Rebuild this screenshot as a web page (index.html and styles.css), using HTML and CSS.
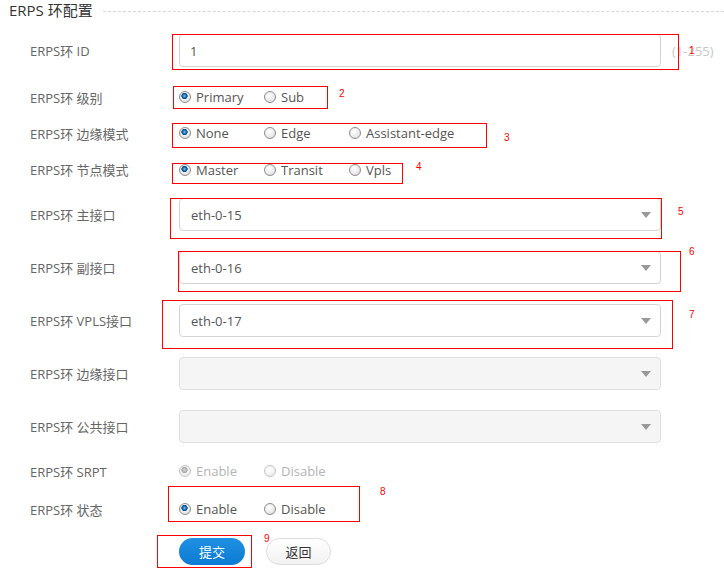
FILE: index.html
```html
<!DOCTYPE html>
<html lang="zh-CN">
<head>
    <meta charset="UTF-8">
    <meta name="viewport" content="width=device-width, initial-scale=1.0">
    <title>ERPS 环配置</title>
    <link rel="stylesheet" href="styles.css">
</head>
<body>
<div class="page">
    <div class="legend">
        <span class="legend-title">ERPS 环配置</span>
        <span class="legend-line"></span>
    </div>

    <form class="form">
        <div class="row row-id">
            <label class="label" for="ring_id">ERPS环 ID</label>
            <input class="text-input" type="text" id="ring_id" value="1">
            <span class="hint">(1-255)</span>
        </div>

        <div class="row row-radio row-first">
            <span class="label">ERPS环 级别</span>
            <div class="radio-group">
                <label class="radio-item"><input class="radio" type="radio" name="level" checked>Primary</label>
                <label class="radio-item"><input class="radio" type="radio" name="level">Sub</label>
            </div>
        </div>

        <div class="row row-radio">
            <span class="label">ERPS环 边缘模式</span>
            <div class="radio-group">
                <label class="radio-item"><input class="radio" type="radio" name="edge" checked>None</label>
                <label class="radio-item"><input class="radio" type="radio" name="edge">Edge</label>
                <label class="radio-item"><input class="radio" type="radio" name="edge">Assistant-edge</label>
            </div>
        </div>

        <div class="row row-radio row-node">
            <span class="label">ERPS环 节点模式</span>
            <div class="radio-group">
                <label class="radio-item"><input class="radio" type="radio" name="node" checked>Master</label>
                <label class="radio-item"><input class="radio" type="radio" name="node">Transit</label>
                <label class="radio-item"><input class="radio" type="radio" name="node">Vpls</label>
            </div>
        </div>

        <div class="row row-select">
            <span class="label">ERPS环 主接口</span>
            <div class="select"><select><option>eth-0-15</option></select></div>
        </div>

        <div class="row row-select">
            <span class="label">ERPS环 副接口</span>
            <div class="select"><select><option>eth-0-16</option></select></div>
        </div>

        <div class="row row-select">
            <span class="label">ERPS环 VPLS接口</span>
            <div class="select"><select><option>eth-0-17</option></select></div>
        </div>

        <div class="row row-select">
            <span class="label">ERPS环 边缘接口</span>
            <div class="select select-disabled"><select disabled><option></option></select></div>
        </div>

        <div class="row row-select">
            <span class="label">ERPS环 公共接口</span>
            <div class="select select-disabled"><select disabled><option></option></select></div>
        </div>

        <div class="row row-radio">
            <span class="label">ERPS环 SRPT</span>
            <div class="radio-group">
                <label class="radio-item is-disabled"><input class="radio" type="radio" name="srpt" checked disabled>Enable</label>
                <label class="radio-item is-disabled"><input class="radio" type="radio" name="srpt" disabled>Disable</label>
            </div>
        </div>

        <div class="row row-status">
            <span class="label">ERPS环 状态</span>
            <div class="radio-group">
                <label class="radio-item"><input class="radio" type="radio" name="status" checked>Enable</label>
                <label class="radio-item"><input class="radio" type="radio" name="status">Disable</label>
            </div>
        </div>

        <div class="row row-actions">
            <button type="submit" class="btn btn-primary">提交</button>
            <button type="button" class="btn btn-default">返回</button>
        </div>
    </form>

    <!-- 标注框 -->
    <div class="mark mark-1"></div><span class="mark-num num-1">1</span>
    <div class="mark mark-2"></div><span class="mark-num num-2">2</span>
    <div class="mark mark-3"></div><span class="mark-num num-3">3</span>
    <div class="mark mark-4"></div><span class="mark-num num-4">4</span>
    <div class="mark mark-5"></div><span class="mark-num num-5">5</span>
    <div class="mark mark-6"></div><span class="mark-num num-6">6</span>
    <div class="mark mark-7"></div><span class="mark-num num-7">7</span>
    <div class="mark mark-8"></div><span class="mark-num num-8">8</span>
    <div class="mark mark-9"></div><span class="mark-num num-9">9</span>
</div>
</body>
</html>
```

FILE: styles.css
```css
body {
    margin: 0;
    font-family: 'Open Sans', 'Noto Sans CJK SC', sans-serif;
    font-size: 13px;
    color: #666;
    background: #fff;
}

.page {
    position: relative;
    width: 724px;
    height: 578px;
    overflow: hidden;
}

.legend {
    display: flex;
    align-items: center;
    height: 20px;
    padding-left: 9px;
}

.legend-title {
    font-size: 15px;
    color: #333;
    line-height: 20px;
}

.legend-line {
    flex: 1;
    margin-left: 10px;
    margin-top: 2px;
    border-top: 1px dashed #d8d8d8;
}

.form {
    margin-top: 14px;
    padding-left: 30px;
}

.row {
    display: flex;
    align-items: center;
}

.label {
    flex: none;
    width: 149px;
    color: #666;
}

.row-id { height: 33px; }
.row-radio { height: 36px; }
.row-first { margin-top: 12px; }
.row-node { height: 37px; }
.row-select { height: 53px; }
.row-status { height: 40px; }
.row-actions { height: 45px; padding-left: 149px; }

.text-input {
    box-sizing: border-box;
    width: 482px;
    height: 33px;
    margin: 0;
    padding: 0 10px;
    border: 1px solid #d4d4d4;
    border-radius: 4px;
    font: inherit;
    color: #555;
    outline: none;
}

.hint {
    margin-left: 11px;
    color: #c8c8c8;
}

.radio-group {
    display: flex;
}

.radio-item {
    display: flex;
    align-items: center;
    flex: none;
    width: 85px;
    white-space: nowrap;
    color: #555;
}

.radio-item:last-child {
    width: auto;
}

.radio-item.is-disabled {
    color: #b4b4b4;
}

.radio {
    appearance: none;
    -webkit-appearance: none;
    flex: none;
    box-sizing: border-box;
    width: 12px;
    height: 12px;
    margin: 0 5px 0 0;
    border: 1px solid #8e8e8e;
    border-radius: 50%;
    background: radial-gradient(circle at 40% 35%, #fff 0, #e9e9e9 60%, #cfcfcf 100%);
}

.radio:checked {
    background: radial-gradient(circle at 45% 40%, #8ccaf4 0, #1d74ba 1.6px, #0c4a86 2.9px, #f2f2f2 3.4px, #e2e2e2 70%, #cfcfcf 100%);
}

.radio:disabled {
    border-color: #c4c4c4;
    background: radial-gradient(circle at 40% 35%, #fff 0, #f1f1f1 60%, #e2e2e2 100%);
}

.radio:disabled:checked {
    background: radial-gradient(circle at 45% 40%, #d6d6d6 0, #a8a8a8 2.9px, #f4f4f4 3.4px, #e8e8e8 100%);
}

.select {
    position: relative;
    width: 482px;
    height: 33px;
}

.select select {
    appearance: none;
    -webkit-appearance: none;
    box-sizing: border-box;
    width: 100%;
    height: 100%;
    margin: 0;
    padding: 0 11px;
    border: 1px solid #d4d4d4;
    border-radius: 4px;
    background: #fff;
    font: inherit;
    color: #555;
    outline: none;
}

.select::after {
    content: "";
    position: absolute;
    right: 10px;
    top: 14px;
    border-left: 5px solid transparent;
    border-right: 5px solid transparent;
    border-top: 6px solid #999;
}

.select-disabled select {
    background: #f1f1f1;
}

.btn {
    box-sizing: border-box;
    height: 27px;
    border-radius: 14px;
    font: inherit;
    cursor: pointer;
}

.btn-primary {
    width: 66px;
    border: none;
    background: linear-gradient(#1f91e2, #0b7ad2);
    color: #fff;
}

.btn-default {
    width: 65px;
    margin-left: 21px;
    border: 1px solid #dcdcdc;
    background: linear-gradient(#fff, #f2f2f2);
    color: #333;
}

/* 标注 */
.mark {
    position: absolute;
    border: 1px solid #f00;
    box-sizing: border-box;
}

.mark-1 { left: 172px; top: 34px; width: 507px; height: 36px; }
.mark-2 { left: 173px; top: 86px; width: 155px; height: 23px; }
.mark-3 { left: 172px; top: 123px; width: 315px; height: 25px; }
.mark-4 { left: 172px; top: 163px; width: 231px; height: 21px; }
.mark-5 { left: 170px; top: 198px; width: 492px; height: 41px; }
.mark-6 { left: 178px; top: 251px; width: 503px; height: 41px; }
.mark-7 { left: 162px; top: 300px; width: 511px; height: 49px; }
.mark-8 { left: 168px; top: 486px; width: 192px; height: 36px; }
.mark-9 { left: 157px; top: 535px; width: 95px; height: 33px; }

.mark-num {
    position: absolute;
    font-family: 'Liberation Sans', sans-serif;
    font-size: 10px;
    line-height: 10px;
    color: #f00;
}

.num-1 { left: 689px; top: 46px; }
.num-2 { left: 339px; top: 89px; }
.num-3 { left: 504px; top: 133px; }
.num-4 { left: 416px; top: 162px; }
.num-5 { left: 678px; top: 207px; }
.num-6 { left: 689px; top: 247px; }
.num-7 { left: 689px; top: 310px; }
.num-8 { left: 380px; top: 487px; }
.num-9 { left: 264px; top: 534px; }
```
